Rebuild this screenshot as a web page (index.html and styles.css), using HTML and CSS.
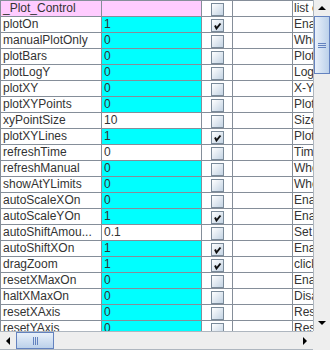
FILE: index.html
```html
<!DOCTYPE html>
<html lang="en">
<head>
  <meta charset="UTF-8">
  <title>Plot Control</title>
  <link rel="stylesheet" href="styles.css">
</head>
<body>
  <div class="frame">
    <div class="viewport">
      <table class="props">
        <colgroup>
          <col class="c-name"><col class="c-val"><col class="c-chk"><col class="c-empty"><col class="c-desc">
        </colgroup>
        <tbody id="rows"></tbody>
      </table>
    </div>
    <div class="vscroll">
      <div class="btn"><span class="tri-up"></span></div>
      <div class="thumb-v"><span class="grip-v"></span></div>
      <div class="track"></div>
      <div class="btn"><span class="tri-down"></span></div>
    </div>
    <div class="hscroll">
      <div class="btn"><span class="tri-left"></span></div>
      <div class="thumb-h"><span class="grip-h"></span></div>
      <div class="track"></div>
      <div class="btn"><span class="tri-right"></span></div>
    </div>
    <div class="corner"></div>
  </div>

  <script>
    // name, value, checked, description, value cell colour
    const rows = [
      ['_Plot_Control', '', 0, 'list of plot controls', 'head'],
      ['plotOn', '1', 1, 'Enable plot', 'on'],
      ['manualPlotOnly', '0', 0, 'When set', 'on'],
      ['plotBars', '0', 0, 'Plot bars', 'on'],
      ['plotLogY', '0', 0, 'Log Y axis', 'on'],
      ['plotXY', '0', 0, 'X-Y plot', 'on'],
      ['plotXYPoints', '0', 0, 'Plot points', 'on'],
      ['xyPointSize', '10', 0, 'Size of points', 'off'],
      ['plotXYLines', '1', 1, 'Plot lines', 'on'],
      ['refreshTime', '0', 0, 'Time', 'off'],
      ['refreshManual', '0', 0, 'When set', 'on'],
      ['showAtYLimits', '0', 0, 'When set', 'on'],
      ['autoScaleXOn', '0', 0, 'Enable', 'on'],
      ['autoScaleYOn', '1', 1, 'Enable', 'on'],
      ['autoShiftAmou...', '0.1', 0, 'Set', 'off'],
      ['autoShiftXOn', '1', 1, 'Enable', 'on'],
      ['dragZoom', '1', 1, 'click and drag', 'on'],
      ['resetXMaxOn', '0', 0, 'Enable', 'on'],
      ['haltXMaxOn', '0', 0, 'Disable', 'on'],
      ['resetXAxis', '0', 0, 'Reset', 'on'],
      ['resetYAxis', '0', 0, 'Reset', 'on']
    ];

    const check = '<svg width="11" height="11" viewBox="0 0 11 11"><path d="M3 5.5 L4.5 8.5 L8.5 3.5" fill="none" stroke="#111" stroke-width="2"/></svg>';
    const body = document.getElementById('rows');
    rows.forEach(([name, val, chk, desc, kind]) => {
      const tr = document.createElement('tr');
      const nameClass = kind === 'head' ? 'head' : '';
      tr.innerHTML = `
        <td class="name ${nameClass}">${name}</td>
        <td class="val ${kind}">${val}</td>
        <td class="chk"><span class="box">${chk ? check : ''}</span></td>
        <td></td>
        <td class="desc">${desc}</td>
      `;
      body.appendChild(tr);
    });
  </script>
</body>
</html>
```

FILE: styles.css
```css
body {
  margin: 0;
  background: #eeeeee;
  font-family: "Liberation Sans", Arial, sans-serif;
  font-size: 12px;
  color: #333333;
}
.frame {
  width: 330px;
  height: 350px;
  display: grid;
  grid-template-columns: 313px 17px;
  grid-template-rows: 331px 19px;
}
.viewport {
  overflow: hidden;
  background: #ffffff;
}
.props {
  border-collapse: collapse;
  table-layout: fixed;
  width: 313px;
  border-top: 1px solid #858e99;
  border-left: 1px solid #858e99;
}
.c-name { width: 101px; }
.c-val { width: 100px; }
.c-chk { width: 31px; }
.c-empty { width: 60px; }
.c-desc { width: 21px; }
.props td {
  height: 15px;
  padding: 0 0 0 2px;
  border-right: 1px solid #858e99;
  border-bottom: 1px solid #858e99;
  white-space: nowrap;
  overflow: hidden;
  line-height: 15px;
}
.props td.desc {
  padding-left: 1px;
  border-right: none;
}
.props td.name.head,
.props td.val.head {
  background: #ffccff;
}
.props td.val.on {
  background: #00ffff;
}
.props td.chk {
  padding: 0;
  text-align: center;
}
.box {
  display: inline-block;
  width: 11px;
  height: 11px;
  border: 1px solid #7a8a99;
  background: linear-gradient(135deg, #ffffff, #c3d3e3);
  vertical-align: middle;
  margin-top: 1px;
}
.box svg {
  display: block;
}

/* scrollbars */
.vscroll {
  display: flex;
  flex-direction: column;
  background: #eeeeee;
  border-left: 1px solid #aeb6bf;
  box-sizing: border-box;
}
.hscroll {
  display: flex;
  height: 17px;
  background: #eeeeee;
  border-top: 1px solid #aeb6bf;
  border-bottom: 1px solid #aeb6bf;
}
.corner {
  background: #eeeeee;
}
.btn {
  flex: 0 0 16px;
  display: flex;
  align-items: center;
  justify-content: center;
  background: #eeeeee;
}
.track {
  flex: 1;
}
.thumb-v,
.thumb-h {
  border: 1px solid #6382bf;
  display: flex;
  align-items: center;
  justify-content: center;
  box-sizing: border-box;
}
.thumb-v {
  flex: 0 0 58px;
  background: linear-gradient(90deg, #e8f0fa, #bcd1ea);
}
.thumb-h {
  flex: 0 0 38px;
  background: linear-gradient(180deg, #e8f0fa, #bcd1ea);
}
.grip-v {
  width: 8px;
  height: 3px;
  border-top: 1px solid #6382bf;
  border-bottom: 1px solid #6382bf;
  background: linear-gradient(transparent 0 1px, #6382bf 1px 2px, transparent 2px);
}
.grip-h {
  width: 3px;
  height: 8px;
  border-left: 1px solid #6382bf;
  border-right: 1px solid #6382bf;
  background: linear-gradient(90deg, transparent 0 1px, #6382bf 1px 2px, transparent 2px);
}
.tri-up {
  border-left: 4px solid transparent;
  border-right: 4px solid transparent;
  border-bottom: 4px solid #000;
}
.tri-down {
  border-left: 4px solid transparent;
  border-right: 4px solid transparent;
  border-top: 4px solid #000;
}
.tri-left {
  border-top: 4px solid transparent;
  border-bottom: 4px solid transparent;
  border-right: 4px solid #000;
}
.tri-right {
  border-top: 4px solid transparent;
  border-bottom: 4px solid transparent;
  border-left: 4px solid #000;
}
```
